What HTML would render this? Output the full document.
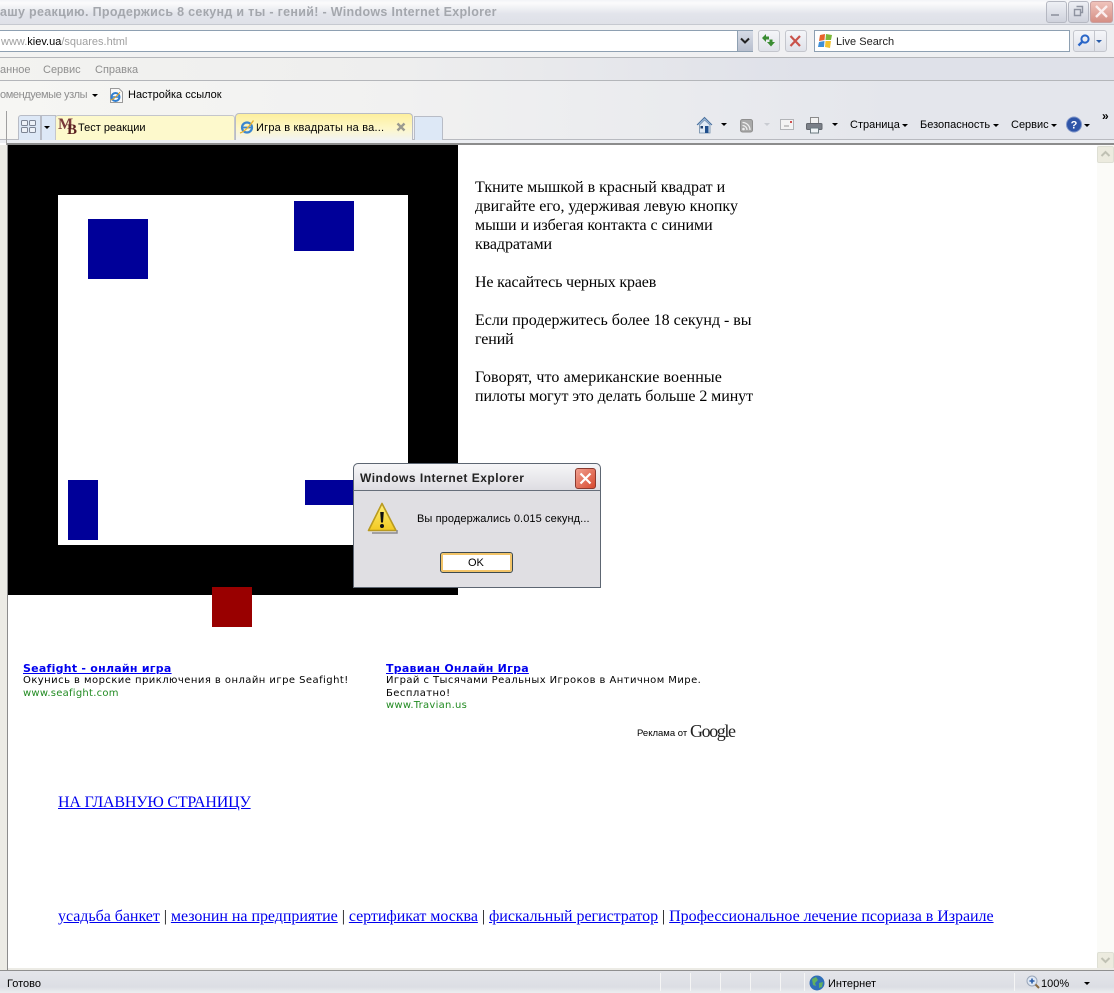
<!DOCTYPE html>
<html><head><meta charset="utf-8"><style>
html,body{margin:0;padding:0;background:#fff}
#p{position:relative;width:1114px;height:993px;overflow:hidden;background:#fff;font-family:"Liberation Sans",sans-serif}
#p div,#p svg{position:absolute}
.t{position:absolute;white-space:nowrap;font-size:11px;line-height:13px;color:#000}
.s{position:absolute;white-space:nowrap;font:16px/19px "Liberation Serif",serif;color:#000}
.v{position:absolute;white-space:nowrap;font-family:"DejaVu Sans",sans-serif;font-size:10px;line-height:12px;color:#000;letter-spacing:.45px}
.h{font-size:11px;font-weight:bold;letter-spacing:.25px}
.g{color:#228b22;letter-spacing:.25px}
.l{color:#0000ee;text-decoration:underline}
.c{position:absolute;width:0;height:0;border-left:3.5px solid transparent;border-right:3.5px solid transparent;border-top:3.5px solid #000}
</style></head><body><div id="p">
<div style="left:0;top:0;width:1114px;height:24px;background:linear-gradient(#f3f4f7 0,#fbfbfc 3px,#e2e4eb 14px,#dfe1e8 24px)"></div>
<div style="left:0;top:24px;width:1114px;height:33px;background:linear-gradient(90deg,#f3f3f2,#eeeff2);border-top:1px solid #c6c9d0;box-sizing:border-box"></div>
<div style="left:0;top:57px;width:1114px;height:1px;background:#b4b6ba"></div>
<div style="left:0;top:58px;width:1114px;height:22px;background:linear-gradient(90deg,#f3f3f0 0,#eeeeee 400px,#dfe1e9 800px)"></div>
<div style="left:0;top:80px;width:1114px;height:1px;background:#b4b6ba"></div>
<div style="left:0;top:81px;width:1114px;height:62px;background:linear-gradient(90deg,#f6f6f3 0,#f1f1f1 400px,#e4e6ec 900px)"></div>
<div style="left:0;top:139px;width:1114px;height:1px;background:#b8bac0"></div>
<div style="left:0;top:140px;width:1114px;height:3px;background:#eceef2"></div>
<div style="left:7px;top:143px;width:1107px;height:2px;background:#8c8c8c"></div>
<div style="left:0;top:145px;width:7px;height:825px;background:#ecebe5"></div>
<div style="left:7px;top:145px;width:1px;height:825px;background:#8c8c8c"></div>
<div style="left:6px;top:111px;width:1px;height:34px;background:#a0a0a0"></div>

<span class="t" style="left:0;top:5px;font:bold 12.5px/15px 'Liberation Sans',sans-serif;color:#a4a7ad;letter-spacing:.31px">ашу реакцию. Продержись 8 секунд и ты - гений! - Windows Internet Explorer</span>

<div style="left:1046px;top:1px;width:19px;height:20px;border:1px solid #b5b8c2;border-radius:3px;background:linear-gradient(#eef0f5,#cfd2dc)"></div>
<div style="left:1051px;top:14px;width:8px;height:2px;background:#9ea2ad"></div>
<div style="left:1068px;top:1px;width:19px;height:20px;border:1px solid #b5b8c2;border-radius:3px;background:linear-gradient(#eef0f5,#cfd2dc)"></div>
<svg style="left:1073px;top:5px" width="12" height="12"><path d="M3.5 1.5h6v6h-2M1.5 4.5h6v6h-6z" fill="none" stroke="#8e93a0" stroke-width="1.4"/></svg>
<div style="left:1090px;top:1px;width:21px;height:20px;border:1px solid #c9a0a0;border-radius:3px;background:linear-gradient(#f0c3bb,#d58f85)"></div>
<svg style="left:1094px;top:4px" width="16" height="16"><path d="M2 2L13 13M13 2L2 13" stroke="#fbeeee" stroke-width="2.4"/></svg>

<div style="left:-2px;top:30px;width:753px;height:20px;background:#fff;border:1px solid #8ea0b2"></div>
<span class="t" style="left:1px;top:36px;color:#a0a0a0">www.<span style="color:#000">kiev.ua</span>/squares.html</span>
<div style="left:737px;top:31px;width:16px;height:20px;background:linear-gradient(#d6dbe6,#b8bfce);border-left:1px solid #8ea0b2;box-sizing:border-box"></div>
<svg style="left:740px;top:37px" width="10" height="8"><path d="M1 1.5L5 5.5L9 1.5" fill="none" stroke="#222" stroke-width="2"/></svg>
<div style="left:758px;top:30px;width:20px;height:20px;border:1px solid #c4c6cd;border-radius:3px;background:linear-gradient(#f5f6f9,#dfe2e9)"></div>
<svg style="left:760px;top:33px" width="17" height="15"><path d="M2 5L6 1V3.5H9V6.5H6V9z" fill="#3a8c32"/><path d="M15 9L11 13.5L7 9H9.5V6.5H12.5V9z" fill="#3a8c32"/></svg>
<div style="left:785px;top:30px;width:20px;height:20px;border:1px solid #c4c6cd;border-radius:3px;background:linear-gradient(#f5f6f9,#dfe2e9)"></div>
<svg style="left:788px;top:34px" width="15" height="14"><path d="M2.5 2L12 12M12 2L2.5 12" stroke="#c9524a" stroke-width="2.2"/></svg>
<div style="left:814px;top:30px;width:254px;height:20px;background:#fff;border:1px solid #8ea0b2"></div>
<svg style="left:817px;top:33px" width="16" height="16"><path d="M3 2L8 1L7.5 7L2 8z" fill="#e9642c"/><path d="M9 1L15 2L14 7L8.5 7z" fill="#7cb83a"/><path d="M2 9L7.5 8L7 14L1 14z" fill="#3f8fd8"/><path d="M8.5 8L14 8L13 15L8 14z" fill="#f1c130"/></svg>
<span class="t" style="left:836px;top:36px;color:#222">Live Search</span>
<div style="left:1073px;top:30px;width:20px;height:20px;border:1px solid #c4c6cd;border-radius:3px 0 0 3px;background:linear-gradient(#f5f6f9,#dfe2e9)"></div>
<svg style="left:1076px;top:33px" width="15" height="15"><circle cx="9" cy="6" r="3.6" fill="none" stroke="#2a66c8" stroke-width="2"/><path d="M6.4 8.6L2.5 12.5" stroke="#2a66c8" stroke-width="2.4"/></svg>
<div style="left:1094px;top:30px;width:11px;height:20px;border:1px solid #c4c6cd;border-radius:0 3px 3px 0;background:linear-gradient(#f5f6f9,#dfe2e9)"></div>
<div class="c" style="left:1096px;top:40px;border-top-color:#2a5ca8"></div>

<span class="t" style="left:0;top:64px;color:#8e8e8e">анное</span>
<span class="t" style="left:43px;top:64px;color:#8e8e8e">Сервис</span>
<span class="t" style="left:95px;top:64px;color:#8e8e8e">Справка</span>

<span class="t" style="left:0;top:89px;color:#8e8e8e;letter-spacing:-.4px">омендуемые узлы</span>
<div class="c" style="left:92px;top:94px"></div>
<svg style="left:109px;top:87px" width="15" height="17"><path d="M1.5 1.5H10L13.5 5V15.5H1.5z" fill="#f8f8f8" stroke="#9a9a9a"/><circle cx="6.5" cy="10" r="4" fill="none" stroke="#2f7ed0" stroke-width="2"/><path d="M3 10H10" stroke="#2f7ed0" stroke-width="1.5"/><path d="M2 13C5 12 9 8 11 5" stroke="#e0a020" stroke-width="1" fill="none"/></svg>
<span class="t" style="left:128px;top:89px">Настройка ссылок</span>

<div style="left:18px;top:115px;width:21px;height:24px;border:1px solid #b8bcc6;border-bottom:0;border-radius:3px 0 0 0;background:#dde8f6"></div>
<svg style="left:21px;top:120px" width="15" height="14"><rect x=".5" y=".5" width="6" height="5" rx="1" fill="#eef2f8" stroke="#7d8594"/><rect x="8.5" y=".5" width="6" height="5" rx="1" fill="#eef2f8" stroke="#7d8594"/><rect x=".5" y="7.5" width="6" height="5" rx="1" fill="#eef2f8" stroke="#7d8594"/><rect x="8.5" y="7.5" width="6" height="5" rx="1" fill="#eef2f8" stroke="#7d8594"/></svg>
<div style="left:41px;top:115px;width:13px;height:24px;border:1px solid #b8bcc6;border-bottom:0;background:#dde8f6"></div>
<div class="c" style="left:44px;top:126px"></div>
<div style="left:55px;top:115px;width:178px;height:24px;border:1px solid #c4c6cc;border-bottom:0;border-radius:3px 3px 0 0;background:#fdf9cc"></div>
<span class="t" style="left:58px;top:116px;font:bold 16px/17px 'Liberation Serif',serif;color:#7a3a3a">M</span>
<span class="t" style="left:67px;top:122px;font:bold 15px/17px 'Liberation Serif',serif;color:#5a2020">B</span>
<span class="t" style="left:78px;top:122px">Тест реакции</span>
<div style="left:235px;top:113px;width:178px;height:27px;border:1px solid #b9bcc4;border-bottom:0;border-radius:4px 4px 0 0;background:linear-gradient(#fdef9e,#fdf7c8 55%,#f2f3f3);box-sizing:border-box"></div>
<svg style="left:239px;top:119px" width="16" height="16"><ellipse cx="8" cy="8.5" rx="5" ry="5" fill="none" stroke="#3a86d0" stroke-width="2.2"/><path d="M3.5 8.5H12.5" stroke="#3a86d0" stroke-width="1.8"/><path d="M1 14C5 13 11 7 14.5 1.5" stroke="#e8b030" stroke-width="1.3" fill="none"/></svg>
<span class="t" style="left:256px;top:122px;letter-spacing:.2px">Игра в квадраты на ва...</span>
<svg style="left:396px;top:122px" width="11" height="11"><path d="M1.5 1.5L8.5 8.5M8.5 1.5L1.5 8.5" stroke="#9a9a90" stroke-width="2.4"/></svg>
<div style="left:414px;top:116px;width:27px;height:23px;border:1px solid #b8bcc6;border-bottom:0;border-radius:0 3px 0 0;background:#dde8f6"></div>

<svg style="left:696px;top:116px" width="18" height="18"><path d="M1 9L8.5 1.5L16 9" fill="#a8c4e4" stroke="#4a6f9c" stroke-width="1"/><path d="M3.5 9V17H14V9L8.5 4z" fill="#dfe9f5" stroke="#6f8aa8" stroke-width=".8"/><rect x="9" y="10" width="3.5" height="7" fill="#1f4e8c"/><rect x="4.5" y="10" width="2.5" height="2.5" fill="#1f3f6c"/></svg>
<div class="c" style="left:721px;top:123px"></div>
<svg style="left:740px;top:119px" width="14" height="14"><rect x=".5" y=".5" width="12" height="12.5" rx="2" fill="#a9a9a9" stroke="#8f8f8f"/><circle cx="3.5" cy="10" r="1.3" fill="#eee"/><path d="M2.5 6.5A4.5 4.5 0 0 1 7 11M2.5 3.5A7.5 7.5 0 0 1 10 11" fill="none" stroke="#eee" stroke-width="1.3"/></svg>
<div class="c" style="left:764px;top:123px;border-top-color:#c9ccd2"></div>
<svg style="left:780px;top:119px" width="15" height="12"><rect x=".5" y=".5" width="13" height="10" fill="#f3f3f3" stroke="#b2b4b8"/><path d="M4 7H9" stroke="#999"/><rect x="10" y="2" width="2" height="2" fill="#d05050"/></svg>
<svg style="left:806px;top:116px" width="17" height="18"><rect x="4.5" y="1.5" width="8" height="6" fill="#f2f2f2" stroke="#8a8a8a"/><rect x=".5" y="7.5" width="15.5" height="6" rx="1" fill="#7b8088" stroke="#63676e"/><rect x="4.5" y="12" width="8" height="5" fill="#f0f4f6" stroke="#6c7a80"/></svg>
<div class="c" style="left:832px;top:123px"></div>
<span class="t" style="left:850px;top:119px">Страница</span>
<div class="c" style="left:902px;top:124px"></div>
<span class="t" style="left:920px;top:119px">Безопасность</span>
<div class="c" style="left:993px;top:124px"></div>
<span class="t" style="left:1011px;top:119px">Сервис</span>
<div class="c" style="left:1051px;top:124px"></div>
<svg style="left:1066px;top:116px" width="17" height="17"><circle cx="8" cy="8.5" r="7.5" fill="#2f55a8" stroke="#7f95c8"/><text x="8" y="12.5" text-anchor="middle" font-family="Liberation Sans" font-weight="bold" font-size="11" fill="#fff">?</text></svg>
<div class="c" style="left:1084px;top:124px"></div>
<span class="t" style="left:1102px;top:110px;font-size:12px;font-weight:bold">»</span>

<div style="left:1097px;top:145px;width:17px;height:823px;background:#fbfbf8"></div>
<div style="left:1097px;top:146px;width:15px;height:15px;border:1px solid #dedfd4;border-radius:2px;background:#ecebdf"></div>
<svg style="left:1100px;top:150px" width="11" height="8"><path d="M1.5 6L5.5 2L9.5 6" fill="none" stroke="#c0c1b4" stroke-width="2"/></svg>
<div style="left:1097px;top:952px;width:15px;height:15px;border:1px solid #dedfd4;border-radius:2px;background:#ecebdf"></div>
<svg style="left:1100px;top:956px" width="11" height="8"><path d="M1.5 2L5.5 6L9.5 2" fill="none" stroke="#c0c1b4" stroke-width="2"/></svg>

<div style="left:8px;top:145px;width:450px;height:450px;background:#000"></div>
<div style="left:58px;top:195px;width:350px;height:350px;background:#fff"></div>
<div style="left:88px;top:219px;width:60px;height:60px;background:#000099"></div>
<div style="left:294px;top:201px;width:60px;height:50px;background:#000099"></div>
<div style="left:68px;top:480px;width:30px;height:60px;background:#000099"></div>
<div style="left:305px;top:480px;width:60px;height:25px;background:#000099"></div>
<div style="left:212px;top:587px;width:40px;height:40px;background:#990000"></div>

<span class="s" style="left:475px;top:178px;letter-spacing:-.03px">Ткните мышкой в красный квадрат и</span>
<span class="s" style="left:475px;top:197px;letter-spacing:-.03px">двигайте его, удерживая левую кнопку</span>
<span class="s" style="left:475px;top:216px;letter-spacing:-.06px">мыши и избегая контакта с синими</span>
<span class="s" style="left:475px;top:235px;letter-spacing:-.1px">квадратами</span>
<span class="s" style="left:475px;top:273px;letter-spacing:-.16px">Не касайтесь черных краев</span>
<span class="s" style="left:475px;top:311px;letter-spacing:-.03px">Если продержитесь более 18 секунд - вы</span>
<span class="s" style="left:475px;top:330px;letter-spacing:-.1px">гений</span>
<span class="s" style="left:475px;top:368px;letter-spacing:.1px">Говорят, что американские военные</span>
<span class="s" style="left:475px;top:387px;letter-spacing:-.08px">пилоты могут это делать больше 2 минут</span>

<span class="v l h" style="left:23px;top:663px">Seafight - онлайн игра</span>
<span class="v" style="left:23px;top:675px">Окунись в морские приключения в онлайн игре Seafight!</span>
<span class="v g" style="left:23px;top:688px">www.seafight.com</span>
<span class="v l h" style="left:386px;top:663px">Травиан Онлайн Игра</span>
<span class="v" style="left:386px;top:675px;letter-spacing:.43px">Играй с Тысячами Реальных Игроков в Античном Мире.</span>
<span class="v" style="left:386px;top:688px">Бесплатно!</span>
<span class="v g" style="left:386px;top:700px">www.Travian.us</span>
<span class="t" style="left:637px;top:727px;font-size:9.5px">Реклама от</span>
<span class="s" style="left:690px;top:722px;font-size:18px;letter-spacing:-1.4px;color:#222">Google</span>

<span class="s l" style="left:58px;top:793px;letter-spacing:-.2px">НА ГЛАВНУЮ СТРАНИЦУ</span>
<span class="s" style="left:58px;top:907px;letter-spacing:-.04px"><span class="l">усадьба банкет</span> | <span class="l">мезонин на предприятие</span> | <span class="l">сертификат москва</span> | <span class="l">фискальный регистратор</span> | <span class="l">Профессиональное лечение псориаза в Израиле</span></span>

<div style="left:8px;top:968px;width:1106px;height:2px;background:#ecebe5"></div>
<div style="left:0;top:970px;width:1114px;height:1px;background:#8f8f8f"></div>
<div style="left:0;top:971px;width:1114px;height:22px;background:linear-gradient(#e4e5ea,#dcdee4 16px,#eceef0)"></div>
<span class="t" style="left:7px;top:978px">Готово</span>
<div style="left:660px;top:973px;width:1px;height:18px;background:#f5f5f5"></div>
<div style="left:690px;top:973px;width:1px;height:18px;background:#f5f5f5"></div>
<div style="left:720px;top:973px;width:1px;height:18px;background:#f5f5f5"></div>
<div style="left:750px;top:973px;width:1px;height:18px;background:#f5f5f5"></div>
<div style="left:780px;top:973px;width:1px;height:18px;background:#f5f5f5"></div>
<div style="left:804px;top:973px;width:1px;height:18px;background:#f5f5f5"></div>
<div style="left:1014px;top:973px;width:1px;height:18px;background:#f5f5f5"></div>
<svg style="left:809px;top:975px" width="16" height="16"><circle cx="8" cy="8" r="7.5" fill="#2f6fb8"/><path d="M3 4L7 2L9 5L6 8L7 11L4 10zM10 8L14 7L13 12L10 13z" fill="#62b060"/></svg>
<span class="t" style="left:828px;top:978px">Интернет</span>
<svg style="left:1026px;top:975px" width="14" height="15"><circle cx="6" cy="6" r="5" fill="#dfe8f5" stroke="#9aa6b8"/><path d="M3.5 6H8.5M6 3.5V8.5" stroke="#2a5ca8" stroke-width="1.6"/><path d="M9.5 9.5L13 13" stroke="#8a6a40" stroke-width="2"/></svg>
<span class="t" style="left:1041px;top:978px">100%</span>
<div class="c" style="left:1084px;top:982px"></div>

<div style="left:353px;top:463px;width:246px;height:123px;border:1px solid #5d6672;border-radius:5px 5px 0 0;background:#e0dfe3"></div>
<div style="left:354px;top:464px;width:246px;height:26px;background:linear-gradient(#f6f6f8,#dedde2);border-radius:5px 5px 0 0"></div>
<div style="left:354px;top:490px;width:246px;height:1px;background:#666e7a"></div>
<span class="t" style="left:360px;top:471px;font:bold 12px/15px 'Liberation Sans',sans-serif;color:#222;letter-spacing:.5px">Windows Internet Explorer</span>
<div style="left:575px;top:468px;width:19px;height:19px;border:1px solid #8a3a30;border-radius:3px;background:linear-gradient(135deg,#f0a090,#d84a30)"></div>
<svg style="left:577px;top:470px" width="17" height="17"><path d="M3.5 3.5L13.5 13.5M13.5 3.5L3.5 13.5" stroke="#fff" stroke-width="2.2"/></svg>
<svg style="left:366px;top:501px" width="33" height="33"><defs><linearGradient id="y" x1="0" y1="0" x2="0" y2="1"><stop offset="0" stop-color="#fff07a"/><stop offset="1" stop-color="#f2c920"/></linearGradient></defs><path d="M16 2.5L30 29.5H2.5z" fill="url(#y)" stroke="#b99a20" stroke-linejoin="round" stroke-width="1.6"/><path d="M31 29V32H6" stroke="#8c8c90" stroke-width="1.5" fill="none"/><path d="M14.2 11H17.8L17 21.5H15z" fill="#111"/><circle cx="16" cy="25" r="2" fill="#111"/></svg>
<span class="t" style="left:417px;top:513px;letter-spacing:.1px">Вы продержались 0.015 секунд...</span>
<div style="left:440px;top:552px;width:71px;height:19px;border:1px solid #3c4a50;border-radius:3px;background:#fff;box-shadow:inset 0 0 0 2px #f2c468"></div>
<span class="t" style="left:468px;top:557px">OK</span>
</div></body></html>
